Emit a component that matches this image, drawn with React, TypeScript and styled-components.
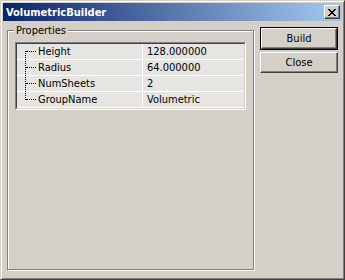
import React from "react";
import styled, { createGlobalStyle } from "styled-components";

const Global = createGlobalStyle`
  html, body { margin: 0; padding: 0; background: #d4d0c8; }
  body { font-family: "DejaVu Sans Condensed", "DejaVu Sans", sans-serif; font-size: 11px; }
`;

const Window = styled.div`
  width: 345px;
  height: 280px;
  box-sizing: border-box;
  background: #d4d0c8;
  border: 1px solid;
  border-color: #d4d0c8 #404040 #404040 #d4d0c8;
  box-shadow: inset 1px 1px 0 #fff, inset -1px -1px 0 #808080;
  padding: 2px;
  display: flex;
  flex-direction: column;
`;

const TitleBar = styled.div`
  height: 18px;
  background: linear-gradient(to right, #0a246a, #a6caf0);
  display: flex;
  align-items: center;
  justify-content: space-between;
  padding: 0 2px 0 3px;
`;

const Title = styled.span`
  color: #fff;
  font-weight: bold;
  font-size: 11px;
`;

const TitleButton = styled.div`
  width: 16px;
  height: 14px;
  box-sizing: border-box;
  background: #d4d0c8;
  border: 1px solid;
  border-color: #fff #404040 #404040 #fff;
  box-shadow: inset -1px -1px 0 #808080;
  display: flex;
  align-items: center;
  justify-content: center;
`;

const Content = styled.div`
  flex: 1;
  display: flex;
  align-items: flex-start;
  padding: 6px 0 0 4px;
  gap: 6px;
`;

const Group = styled.div`
  position: relative;
  margin-top: 3px;
  width: 247px;
  height: 240px;
  box-sizing: border-box;
  border: 1px solid #808080;
  box-shadow: inset 1px 1px 0 #fff, 1px 1px 0 #fff;
  padding: 11px 6px 0 7px;
`;

const GroupLabel = styled.span`
  position: absolute;
  top: -7px;
  left: 6px;
  padding: 0 2px;
  background: #d4d0c8;
  color: #000;
  line-height: 13px;
`;

const Grid = styled.div`
  width: 231px;
  box-sizing: border-box;
  border: 1px solid;
  border-color: #808080 #fff #fff #808080;
  background: #e6e5e2;
`;

const GridInner = styled.div`
  border: 1px solid;
  border-color: #404040 #d4d0c8 #d4d0c8 #404040;
`;

const Row = styled.div`
  display: grid;
  grid-template-columns: 126px 1fr;
  height: 16px;
  box-sizing: border-box;
  border-bottom: 1px solid #fff;
`;

const NameCell = styled.div`
  position: relative;
  border-right: 1px solid #fff;
  padding-left: 21px;
  line-height: 15px;
  color: #000;
`;

const TreeV = styled.span<{ $first?: boolean; $last?: boolean }>`
  position: absolute;
  left: 8px;
  top: ${(p) => (p.$first ? "7px" : "-1px")};
  height: ${(p) => (p.$last ? (p.$first ? "1px" : "9px") : p.$first ? "9px" : "17px")};
  border-left: 1px dotted #000;
`;

const TreeH = styled.span`
  position: absolute;
  left: 9px;
  top: 7px;
  width: 10px;
  border-top: 1px dotted #000;
`;

const ValueCell = styled.div`
  padding-left: 4px;
  line-height: 15px;
  color: #000;
`;

const Buttons = styled.div`
  display: flex;
  flex-direction: column;
  gap: 2px;
`;

const Button = styled.div<{ $default?: boolean }>`
  width: 78px;
  height: ${(p) => (p.$default ? "23px" : "21px")};
  box-sizing: border-box;
  border: ${(p) => (p.$default ? "1px solid #000" : "none")};
  display: flex;
`;

const ButtonFace = styled.div`
  flex: 1;
  background: #d4d0c8;
  border: 1px solid;
  border-color: #fff #404040 #404040 #fff;
  box-shadow: inset -1px -1px 0 #808080;
  display: flex;
  align-items: center;
  justify-content: center;
  color: #000;
`;

const props = [
  ["Height", "128.000000"],
  ["Radius", "64.000000"],
  ["NumSheets", "2"],
  ["GroupName", "Volumetric"],
];

export default function App() {
  return (
    <>
      <Global />
      <Window>
        <TitleBar>
          <Title>VolumetricBuilder</Title>
          <TitleButton>
            <svg width="8" height="7" viewBox="0 0 8 7">
              <path d="M0 0h2v1h-2zM6 0h2v1h-2zM1 1h2v1h-2zM5 1h2v1h-2zM2 2h4v1h-4zM3 3h2v1h-2zM2 4h4v1h-4zM1 5h2v1h-2zM5 5h2v1h-2zM0 6h2v1h-2zM6 6h2v1h-2z" fill="#000" />
            </svg>
          </TitleButton>
        </TitleBar>
        <Content>
          <Group>
            <GroupLabel>Properties</GroupLabel>
            <Grid>
              <GridInner>
                {props.map(([k, v], i) => (
                  <Row key={k}>
                    <NameCell>
                      <TreeV $first={i === 0} $last={i === props.length - 1} />
                      <TreeH />
                      {k}
                    </NameCell>
                    <ValueCell>{v}</ValueCell>
                  </Row>
                ))}
              </GridInner>
            </Grid>
          </Group>
          <Buttons>
            <Button $default>
              <ButtonFace>Build</ButtonFace>
            </Button>
            <Button>
              <ButtonFace>Close</ButtonFace>
            </Button>
          </Buttons>
        </Content>
      </Window>
    </>
  );
}
